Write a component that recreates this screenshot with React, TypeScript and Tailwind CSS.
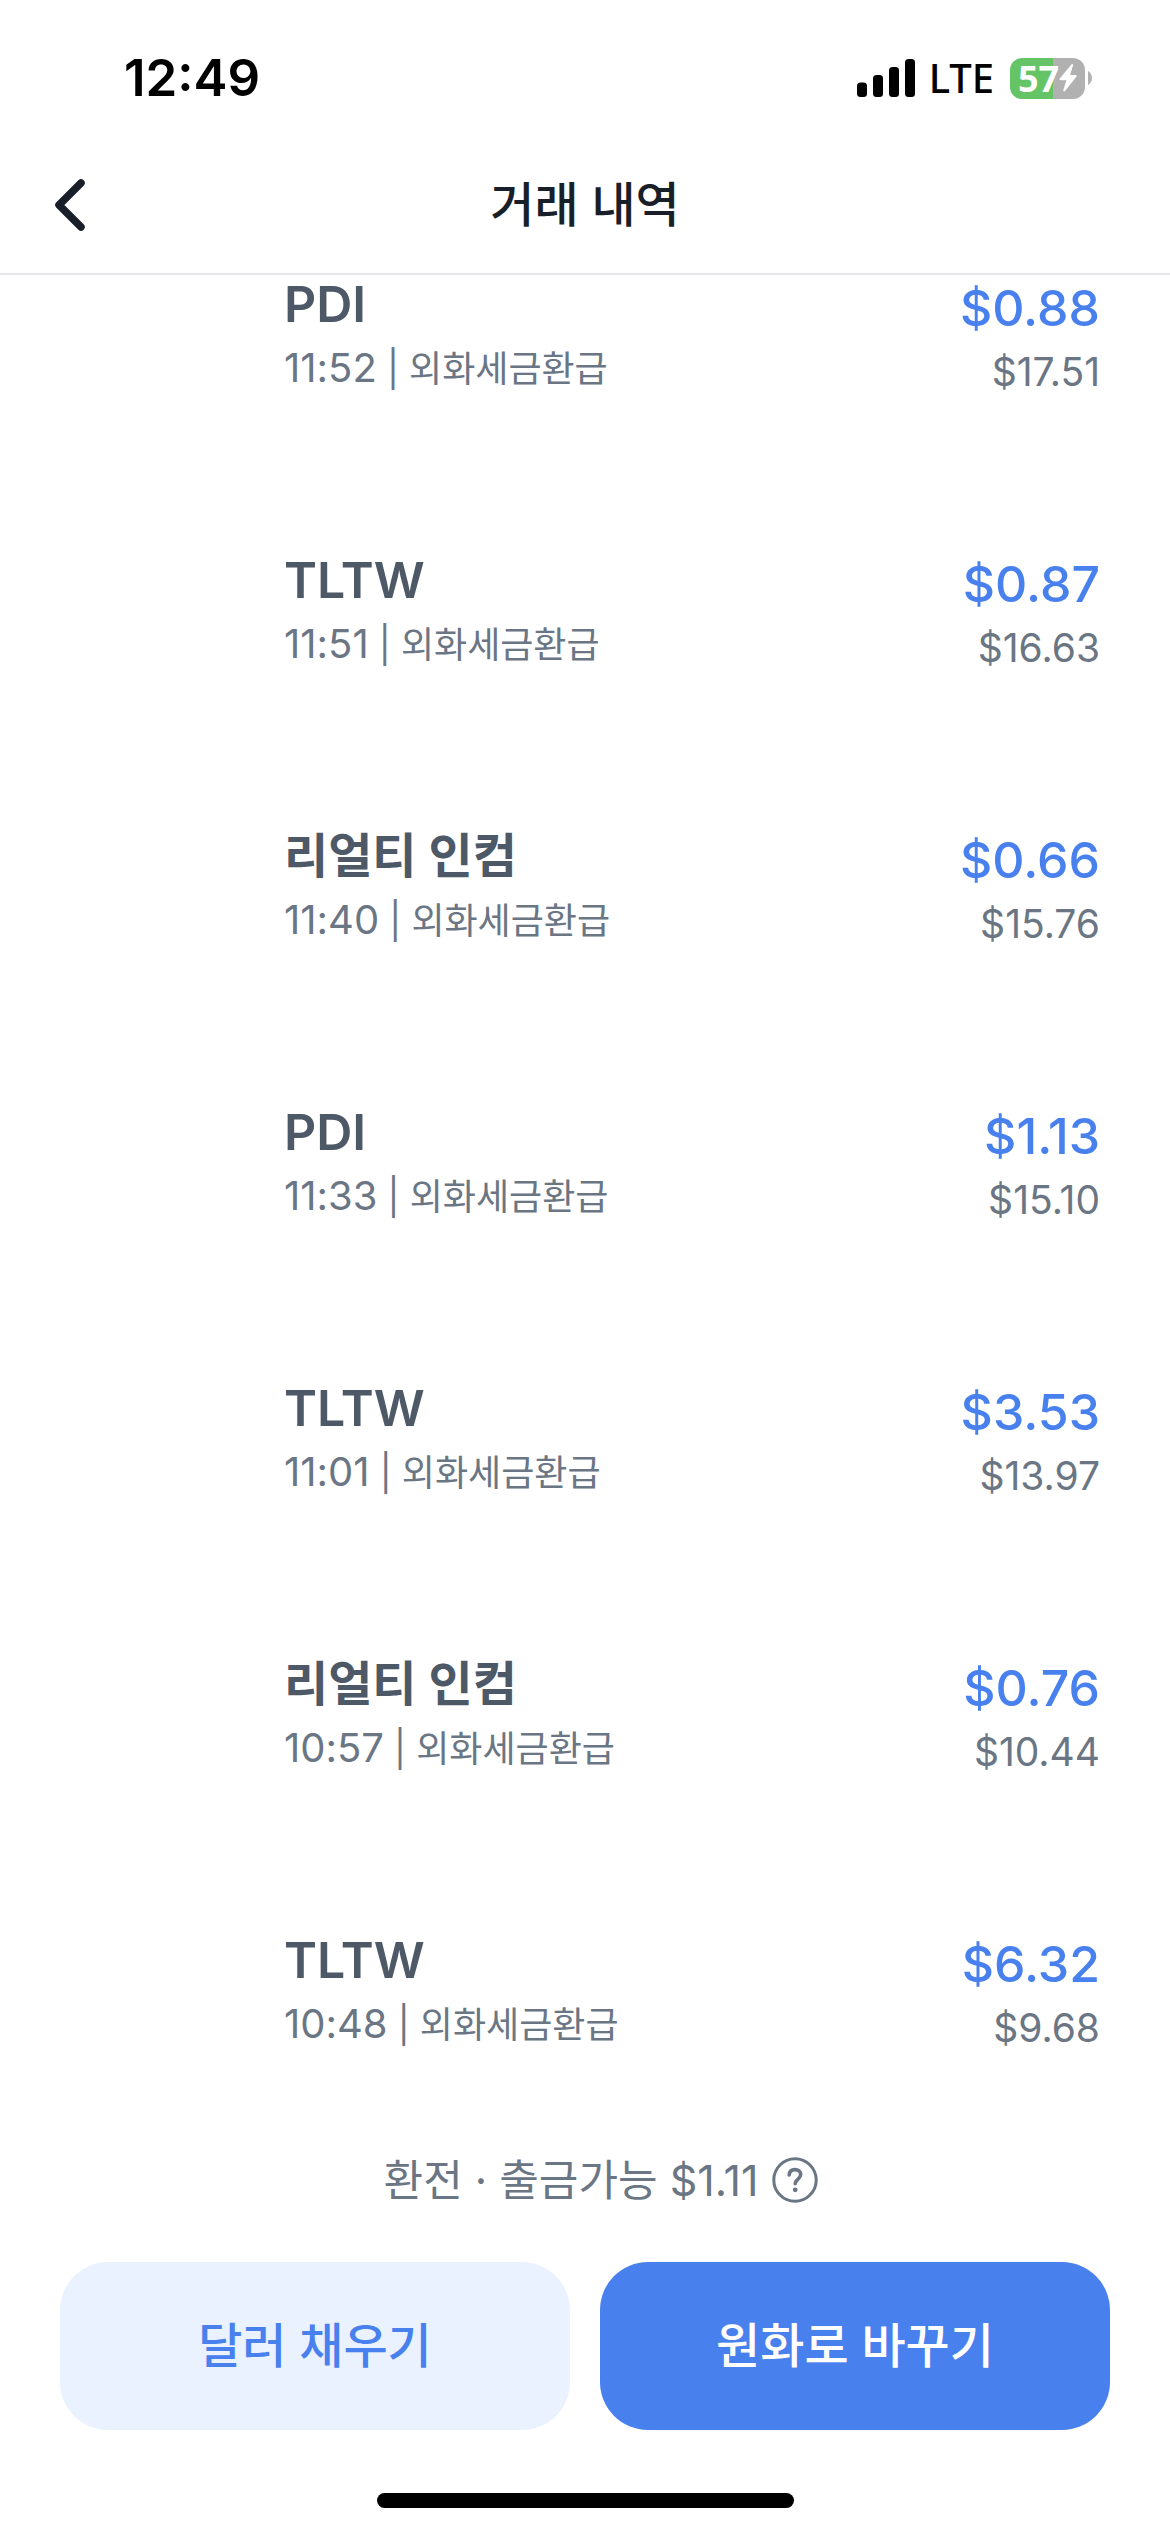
type Transaction = {
  id: number;
  name: string;
  time: string;
  type: string;
  amount: string;
  balance: string;
};

const transactions: Transaction[] = [
  { id: 1, name: "PDI", time: "11:52", type: "외화세금환급", amount: "$0.88", balance: "$17.51" },
  { id: 2, name: "TLTW", time: "11:51", type: "외화세금환급", amount: "$0.87", balance: "$16.63" },
  { id: 3, name: "리얼티 인컴", time: "11:40", type: "외화세금환급", amount: "$0.66", balance: "$15.76" },
  { id: 4, name: "PDI", time: "11:33", type: "외화세금환급", amount: "$1.13", balance: "$15.10" },
  { id: 5, name: "TLTW", time: "11:01", type: "외화세금환급", amount: "$3.53", balance: "$13.97" },
  { id: 6, name: "리얼티 인컴", time: "10:57", type: "외화세금환급", amount: "$0.76", balance: "$10.44" },
  { id: 7, name: "TLTW", time: "10:48", type: "외화세금환급", amount: "$6.32", balance: "$9.68" },
];

// Hangul names are set a step smaller than tickers so both look the same height
const isTicker = (name: string) => /^[A-Z]+$/.test(name);

const StatusBar = () => (
  <div className="flex h-[156px] items-center justify-between pr-[78px] pl-[124px] text-black">
    <span className="text-[51px] leading-[60px] font-semibold">12:49</span>
    <div className="flex items-center">
      <svg width="58" height="38" viewBox="0 0 58 38" fill="currentColor" aria-hidden="true">
        <rect x="0" y="23.5" width="10" height="14.5" rx="3.5" />
        <rect x="16" y="16" width="10" height="22" rx="3.5" />
        <rect x="32" y="8" width="10" height="30" rx="3.5" />
        <rect x="48" y="0" width="10" height="38" rx="3.5" />
      </svg>
      <span className="ml-3.5 font-['Noto_Sans',sans-serif] text-[40px] leading-[48px] font-medium">LTE</span>
      {/* Battery: 57% charged, plugged in */}
      <div className="ml-4 flex items-center gap-[3px]">
        <div className="flex h-[41px] w-[75px] items-center justify-center rounded-xl bg-linear-to-r from-[#65c466] from-57% to-[#b1b1b1] to-57% text-white">
          <span className="font-['Noto_Sans',sans-serif] text-[36px] leading-[41px] font-bold">57</span>
          <svg width="18" height="28" viewBox="0 0 18 28" fill="currentColor" aria-hidden="true">
            <path d="M12.4.6 1 14.2c-.9 1.1-.5 2 .9 2h5.5L4.4 25.7c-.5 1.7.7 2.3 1.8 1L17.2 13c.9-1.1.4-2-.9-2H11L14 1.6c.4-1.5-.7-2.1-1.6-1Z" />
          </svg>
        </div>
        <svg width="4" height="14" viewBox="0 0 4 14" fill="#b1b1b1" aria-hidden="true">
          <path d="M0 0c2.500 1.500 4 4 4 7s-1.500 5.500-4 7Z" />
        </svg>
      </div>
    </div>
  </div>
);

const Header = () => (
  <header className="grid h-[119px] grid-cols-[1fr_auto_1fr] items-start border-b-2 border-[#e5e5eb] px-12 text-[#191f28]">
    <button type="button" aria-label="뒤로" className="flex h-[98px] w-11 items-center justify-center">
      <svg width="30" height="52" viewBox="0 0 30 52" fill="none" stroke="currentColor" strokeWidth="7.5" strokeLinecap="round" strokeLinejoin="round" aria-hidden="true">
        <path d="M26 4 4 26l22 22" />
      </svg>
    </button>
    <h1 className="text-[48px] leading-[98px] font-medium">거래 내역</h1>
  </header>
);

const TransactionRow = ({ transaction }: { transaction: Transaction }) => (
  <li className="flex justify-between pr-[70px] pl-[284px]">
    <div className="flex flex-col">
      <span
        className={`leading-[58px] font-semibold text-[#4e5968] ${isTicker(transaction.name) ? "text-[50px]" : "text-[48px]"}`}
      >
        {transaction.name}
      </span>
      <span className="text-[40px] leading-[70px] text-[#6b7684]">
        {transaction.time}
        <span className="text-[36px]"> | {transaction.type}</span>
      </span>
    </div>
    <div className="flex flex-col items-end pt-1">
      <span className="text-[50px] leading-[58px] font-medium text-[#4880ee]">{transaction.amount}</span>
      <span className="text-[39px] leading-[70px] text-[#6b7684]">{transaction.balance}</span>
    </div>
  </li>
);

const Footer = () => (
  <footer className="flex flex-col items-center">
    <div className="flex items-center gap-3.5 pl-8 text-[#6b7684]">
      <span className="text-[43px] leading-[60px]">환전 · 출금가능 $1.11</span>
      <button type="button" aria-label="도움말">
        <svg width="46" height="46" viewBox="0 0 46 46" fill="none" stroke="currentColor" aria-hidden="true">
          <circle cx="23" cy="23" r="21.2" strokeWidth="3" />
          <path d="M17.200 18c.2-3.500 2.500-5.400 5.800-5.400s5.700 2 5.700 5c0 4.300-5.500 4.600-5.500 9.200" strokeWidth="3.6" strokeLinecap="round" />
          <circle cx="23.2" cy="32.800" r="2.4" fill="currentColor" stroke="none" />
        </svg>
      </button>
    </div>
    <div className="mt-[52px] grid w-full grid-cols-2 gap-[30px] px-[60px]">
      <button type="button" className="h-[168px] rounded-[48px] bg-[#e9f2fe] text-[48px] font-medium text-[#4880ee]">
        달러 채우기
      </button>
      <button type="button" className="h-[168px] rounded-[48px] bg-[#4880ee] text-[48px] font-medium text-white">
        원화로 바꾸기
      </button>
    </div>
    <div className="mt-[63px] mb-6 h-[15px] w-[417px] rounded-full bg-black" />
  </footer>
);

export default function App() {
  return (
    <div className="flex min-h-screen flex-col bg-white font-['Inter','Noto_Sans_CJK_KR',sans-serif]">
      <StatusBar />
      <Header />
      <main className="grow pb-10">
        <ul className="flex flex-col gap-36">
          {transactions.map((transaction) => (
            <TransactionRow key={transaction.id} transaction={transaction} />
          ))}
        </ul>
      </main>
      <Footer />
    </div>
  );
}
